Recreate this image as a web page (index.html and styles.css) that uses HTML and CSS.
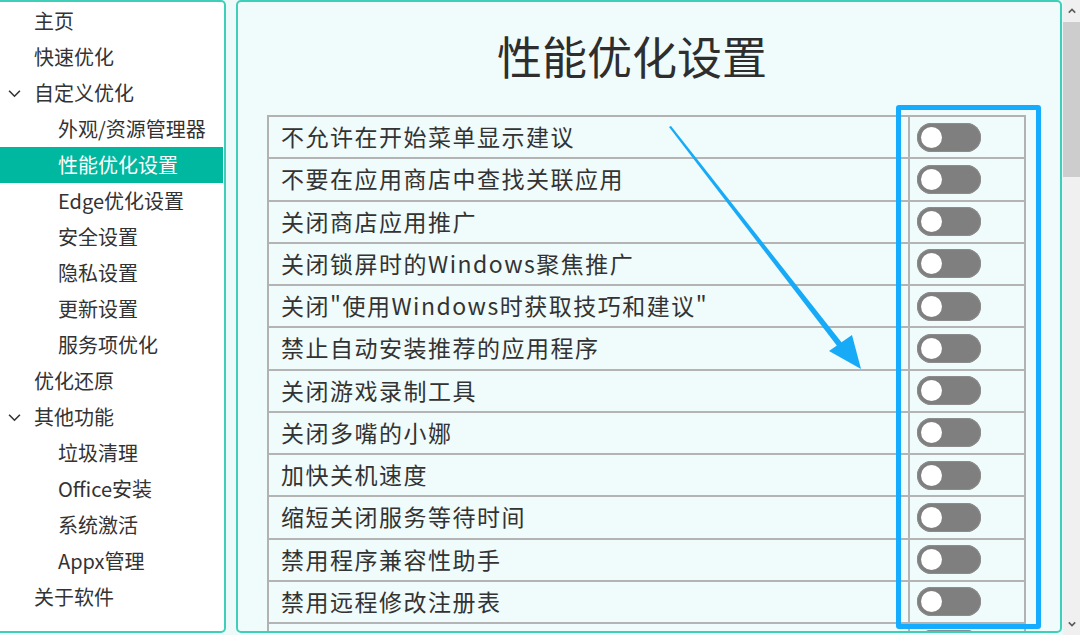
FILE: index.html
```html
<!DOCTYPE html>
<html lang="zh-CN">
<head>
    <meta charset="UTF-8">
    <title>性能优化设置</title>
    <link rel="stylesheet" href="styles.css">
</head>
<body>
<div class="window">
    <ul class="nav">
        <li>主页</li>
        <li>快速优化</li>
        <li class="group"><svg class="chev" viewBox="0 0 12 8"><path d="M1 1.5 L6 6.5 L11 1.5"/></svg>自定义优化</li>
        <li class="sub">外观/资源管理器</li>
        <li class="sub active">性能优化设置</li>
        <li class="sub">Edge优化设置</li>
        <li class="sub">安全设置</li>
        <li class="sub">隐私设置</li>
        <li class="sub">更新设置</li>
        <li class="sub">服务项优化</li>
        <li>优化还原</li>
        <li class="group"><svg class="chev" viewBox="0 0 12 8"><path d="M1 1.5 L6 6.5 L11 1.5"/></svg>其他功能</li>
        <li class="sub">垃圾清理</li>
        <li class="sub">Office安装</li>
        <li class="sub">系统激活</li>
        <li class="sub">Appx管理</li>
        <li>关于软件</li>
    </ul>
    <div class="main">
        <h1 class="title">性能优化设置</h1>
        <div class="table">
            <div class="row"><div class="name">不允许在开始菜单显示建议</div><div class="cell"><span class="toggle"></span></div></div>
            <div class="row"><div class="name">不要在应用商店中查找关联应用</div><div class="cell"><span class="toggle"></span></div></div>
            <div class="row"><div class="name">关闭商店应用推广</div><div class="cell"><span class="toggle"></span></div></div>
            <div class="row"><div class="name">关闭锁屏时的Windows聚焦推广</div><div class="cell"><span class="toggle"></span></div></div>
            <div class="row"><div class="name">关闭"使用Windows时获取技巧和建议"</div><div class="cell"><span class="toggle"></span></div></div>
            <div class="row"><div class="name">禁止自动安装推荐的应用程序</div><div class="cell"><span class="toggle"></span></div></div>
            <div class="row"><div class="name">关闭游戏录制工具</div><div class="cell"><span class="toggle"></span></div></div>
            <div class="row"><div class="name">关闭多嘴的小娜</div><div class="cell"><span class="toggle"></span></div></div>
            <div class="row"><div class="name">加快关机速度</div><div class="cell"><span class="toggle"></span></div></div>
            <div class="row"><div class="name">缩短关闭服务等待时间</div><div class="cell"><span class="toggle"></span></div></div>
            <div class="row"><div class="name">禁用程序兼容性助手</div><div class="cell"><span class="toggle"></span></div></div>
            <div class="row"><div class="name">禁用远程修改注册表</div><div class="cell"><span class="toggle"></span></div></div>
            <div class="row"><div class="name">禁用诊断数据收集</div><div class="cell"><span class="toggle"></span></div></div>
        </div>
    </div>
    <div class="scrollbar">
        <svg class="sarrow" viewBox="0 0 10 6"><path d="M1 5 L5 1 L9 5"/></svg>
        <div class="thumb"></div>
        <div class="track"></div>
        <svg class="sarrow" viewBox="0 0 10 6"><path d="M1 1 L5 5 L9 1"/></svg>
    </div>
</div>
<!-- 标注: 蓝框和箭头 -->
<div class="mark"></div>
<svg class="arrow" width="1080" height="635" viewBox="0 0 1080 635">
    <polygon points="669,127 671,126 846,348 841,351"/>
    <polygon points="861,369 829,351 852,335"/>
</svg>
</body>
</html>
```

FILE: styles.css
```css
* {
    margin: 0;
    padding: 0;
    box-sizing: border-box;
}

body {
    width: 1080px;
    height: 635px;
    overflow: hidden;
    background-color: #eefafa;
    font-family: "Noto Sans CJK SC", "Noto Sans", sans-serif;
    color: #333;
}

.window {
    display: flex;
    height: 635px;
}

/* 左侧导航 */
.nav {
    width: 226px;
    height: 633px;
    flex-shrink: 0;
    padding-top: 1px;
    list-style: none;
    background-color: #fff;
    border: 2px solid #3fcfb9;
    border-left: none;
    border-radius: 0 5px 5px 0;
}

.nav > li {
    position: relative;
    height: 36px;
    padding-left: 34px;
    font-size: 20px;
    line-height: 36px;
    white-space: nowrap;
}

.nav > li.sub {
    padding-left: 58px;
}

.nav > li.active {
    margin-right: 1px;
    background-color: #00b8a0;
    color: #fff;
}

.nav .chev {
    position: absolute;
    left: 8px;
    top: 14px;
    width: 13px;
    height: 9px;
    fill: none;
    stroke: #333;
    stroke-width: 1.5;
}

/* 主区域 */
.main {
    width: 826px;
    height: 633px;
    margin-left: 10px;
    flex-shrink: 0;
    overflow: hidden;
    background-color: #f0fbfb;
    border: 2px solid #3fcfb9;
    border-radius: 5px;
}

.title {
    height: 113px;
    padding: 26px 34px 0 0;
    font-size: 45px;
    font-weight: normal;
    line-height: 56px;
    text-align: center;
    color: #2e2e2e;
}

.table {
    width: 759px;
    margin-left: 29px;
    border: 2px solid #b2b2b2;
    border-bottom: none;
}

.table > .row {
    display: flex;
    height: 42.25px;
    border-bottom: 2px solid #b4b4b4;
}

.row > .name {
    width: 641px;
    padding-left: 12px;
    font-size: 23px;
    line-height: 38px;
    letter-spacing: 1.5px;
    white-space: nowrap;
    border-right: 2px solid #b4b4b4;
}

.row > .cell {
    flex: 1;
    display: flex;
    align-items: center;
    padding-left: 7px;
}

.toggle {
    position: relative;
    display: block;
    width: 64px;
    height: 29px;
    border-radius: 15px;
    background-color: #7f7f7f;
    box-shadow: inset 0 0 0 1px #8c8c8c;
}

.toggle::after {
    content: "";
    position: absolute;
    left: 4px;
    top: 4px;
    width: 21px;
    height: 21px;
    border-radius: 50%;
    background-color: #fff;
}

/* 滚动条 */
.scrollbar {
    width: 18px;
    height: 635px;
    margin-left: 1px;
    display: flex;
    flex-direction: column;
    background-color: #f0f0f0;
}

.sarrow {
    width: 18px;
    height: 22px;
    padding: 8px 5px;
    fill: none;
    stroke: #5c5c5c;
    stroke-width: 2;
}

.thumb {
    height: 155px;
    background-color: #cdcdcd;
}

.track {
    flex: 1;
}

/* 标注 */
.mark {
    position: absolute;
    left: 896px;
    top: 105px;
    width: 145px;
    height: 524px;
    border: 5px solid #13acff;
    border-radius: 3px;
}

.arrow {
    position: absolute;
    left: 0;
    top: 0;
    fill: #17aaf7;
}
```
